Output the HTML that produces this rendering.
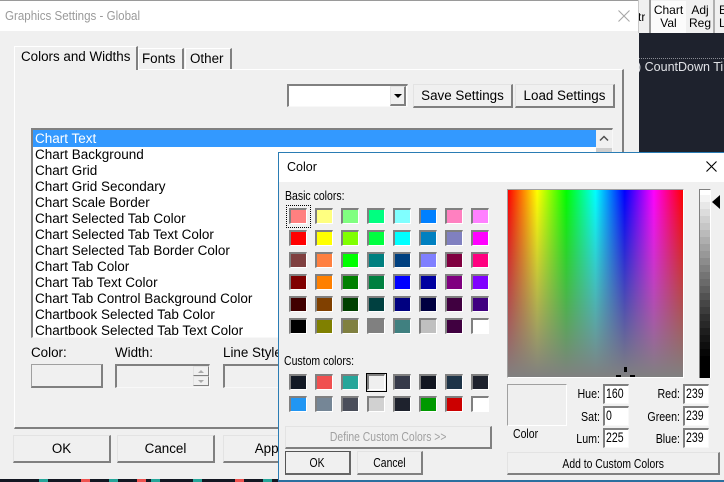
<!DOCTYPE html>
<html>
<head>
<meta charset="utf-8">
<style>
html,body{margin:0;padding:0}
body{width:724px;height:482px;position:relative;overflow:hidden;background:#1e222d;font-family:"Liberation Sans",sans-serif;font-size:13.4px;color:#000}
div,span{position:absolute;box-sizing:border-box;white-space:nowrap}
.btn{background:#f0f0f0;border-top:1px solid #e3e3e3;border-left:1px solid #e3e3e3;border-right:2px solid #808080;border-bottom:2px solid #808080;text-align:center}
.sunk{background:#fff;border-top:2px solid #808080;border-left:2px solid #808080;border-right:1px solid #f8f8f8;border-bottom:1px solid #f8f8f8}
.row{left:2px;line-height:16px;height:16px;font-size:13.5px}
.grid{display:grid;grid-template-columns:repeat(8,18px);column-gap:8px;row-gap:6px}
.grid i{display:block;width:18px;height:16px;border-top:2px solid #808080;border-left:2px solid #808080;border-right:1px solid #fff;border-bottom:1px solid #fff;box-sizing:border-box}
.lb{font-size:13px;line-height:16px;text-align:right;transform:scaleX(.82);transform-origin:right center}
.in{font-size:13.5px;line-height:16px;padding-left:1px}
.in span{position:static;display:inline-block;transform:scaleX(.78);transform-origin:left center}
.s{position:static;display:inline-block;transform:scaleX(.83)}
.sl{transform:scaleX(.84);transform-origin:left center}
</style>
</head>
<body>
<!-- right background tabs -->
<div style="left:639px;top:0;width:85px;height:33px;background:#f0f0f0"></div>
<div style="left:649px;top:0;width:2px;height:33px;background:#9a9a9a"></div>
<div style="left:651px;top:1px;width:35px;height:32px;background:#fbfbfb"></div>
<div style="left:713px;top:0;width:2px;height:33px;background:#b0b0b0"></div>
<div style="left:639px;top:0;width:6px;height:33px;overflow:hidden"><div style="left:-1px;top:9px;font-size:12px;line-height:16px">tr</div></div>
<div style="left:651px;top:4px;width:35px;text-align:center;font-size:12px;line-height:13px;height:28px">Chart<br>Val</div>
<div style="left:686px;top:4px;width:28px;text-align:center;font-size:12px;line-height:13px;height:28px">Adj<br>Reg</div>
<div style="left:719px;top:4px;font-size:12px;line-height:13px;height:28px">E<br>L</div>
<div style="left:639px;top:58px;width:85px;height:1px;border-top:1px dotted #8a8d95"></div>
<div style="left:639px;top:59px;width:85px;height:17px;overflow:hidden"><div style="left:-2px;top:0;font-size:12.500px;line-height:17px;color:#e0e2e6">) CountDown Tir</div></div>

<!-- bottom chart strip -->
<div style="left:0;top:479px;width:300px;height:3px;background:#131722"></div>
<div style="left:39px;top:479px;width:9px;height:3px;background:#26a69a"></div>
<div style="left:81px;top:479px;width:9px;height:3px;background:#ef5350"></div>
<div style="left:109px;top:479px;width:9px;height:3px;background:#26a69a"></div>
<div style="left:137px;top:479px;width:9px;height:3px;background:#ef5350"></div>
<div style="left:151px;top:479px;width:9px;height:3px;background:#26a69a"></div>
<div style="left:193px;top:479px;width:9px;height:3px;background:#26a69a"></div>
<div style="left:235px;top:479px;width:9px;height:3px;background:#ef5350"></div>
<div style="left:263px;top:479px;width:9px;height:3px;background:#26a69a"></div>

<!-- main dialog -->
<div style="left:0;top:0;width:639px;height:479px;background:#f0f0f0"></div>
<div style="left:0;top:0;width:639px;height:31px;background:#fff"></div>
<div style="left:0;top:0;width:639px;height:1px;background:#9a9a9a"></div>
<div style="left:638px;top:0;width:1px;height:33px;background:#c8c8c8"></div>
<div style="left:5px;top:8px;font-size:13px;line-height:16px;color:#9a9a9a;transform:scaleX(.89);transform-origin:left center">Graphics Settings - Global</div>
<svg style="position:absolute;left:617px;top:9px" width="14" height="14" viewBox="0 0 14 14"><path d="M1.500 1.500L12.500 12.500M12.500 1.500L1.500 12.500" stroke="#a8a8a8" stroke-width="1.100" fill="none"/></svg>

<!-- tab page -->
<div style="left:14px;top:69px;width:610px;height:360px;border-top:1px solid #fff;border-left:1px solid #fff;border-right:2px solid #808080;border-bottom:2px solid #808080"></div>
<div style="left:14px;top:46px;width:124px;height:24px;background:#f0f0f0;border-top:1px solid #fff;border-left:1px solid #fff;border-right:2px solid #808080"></div>
<div style="left:21px;top:48px;line-height:17px">Colors and Widths</div>
<div style="left:138px;top:48px;width:46px;height:21px;border-top:1px solid #fff;border-left:1px solid #fff;border-right:2px solid #808080"></div>
<div style="left:142px;top:50px;line-height:17px">Fonts</div>
<div style="left:185px;top:48px;width:47px;height:21px;border-top:1px solid #fff;border-left:1px solid #fff;border-right:2px solid #808080"></div>
<div style="left:190px;top:50px;line-height:17px">Other</div>

<!-- combo -->
<div class="sunk" style="left:287px;top:84px;width:121px;height:23px"></div>
<div class="btn" style="left:390px;top:86px;width:16px;height:20px"></div>
<div style="left:394px;top:94px;width:0;height:0;border-left:4px solid transparent;border-right:4px solid transparent;border-top:4px solid #000"></div>
<div class="btn" style="left:413px;top:84px;width:100px;height:24px;line-height:21px">Save Settings</div>
<div class="btn" style="left:515px;top:84px;width:100px;height:24px;line-height:21px">Load Settings</div>

<!-- list -->
<div class="sunk" style="left:31px;top:128px;width:582px;height:210px;overflow:hidden">
  <div style="left:0;top:0;width:563px;height:17px;background:#3399ff"></div>
  <div class="row" style="top:0;color:#fff;line-height:17px">Chart Text</div>
  <div class="row" style="top:17px">Chart Background</div>
  <div class="row" style="top:33px">Chart Grid</div>
  <div class="row" style="top:49px">Chart Grid Secondary</div>
  <div class="row" style="top:65px">Chart Scale Border</div>
  <div class="row" style="top:81px">Chart Selected Tab Color</div>
  <div class="row" style="top:97px">Chart Selected Tab Text Color</div>
  <div class="row" style="top:113px">Chart Selected Tab Border Color</div>
  <div class="row" style="top:129px">Chart Tab Color</div>
  <div class="row" style="top:145px">Chart Tab Text Color</div>
  <div class="row" style="top:161px">Chart Tab Control Background Color</div>
  <div class="row" style="top:177px">Chartbook Selected Tab Color</div>
  <div class="row" style="top:193px">Chartbook Selected Tab Text Color</div>
  <div style="left:563px;top:0;width:16px;height:18px;background:#f0f0f0"></div>
  <div style="left:563px;top:18px;width:16px;height:8px;background:#cdcdcd"></div>
  <svg style="position:absolute;left:566px;top:5px" width="10" height="7" viewBox="0 0 10 7"><path d="M1 5.500L5 1.500L9 5.500" stroke="#505050" stroke-width="1.500" fill="none"/></svg>
</div>

<div style="left:31px;top:344px;line-height:17px">Color:</div>
<div style="left:115px;top:344px;line-height:17px">Width:</div>
<div style="left:223px;top:344px;line-height:17px">Line Style:</div>
<div class="btn" style="left:31px;top:364px;width:72px;height:24px;border-top:1px solid #a0a0a0;border-left:1px solid #a0a0a0"></div>
<div class="sunk" style="left:115px;top:364px;width:95px;height:24px;background:#f0f0f0"></div>
<div class="btn" style="left:193px;top:366px;width:16px;height:10px;border-width:1px"></div>
<div class="btn" style="left:193px;top:376px;width:16px;height:10px;border-width:1px"></div>
<div style="left:198px;top:370px;width:0;height:0;border-left:3px solid transparent;border-right:3px solid transparent;border-bottom:3px solid #aaa"></div>
<div style="left:198px;top:380px;width:0;height:0;border-left:3px solid transparent;border-right:3px solid transparent;border-top:3px solid #aaa"></div>
<div class="sunk" style="left:223px;top:364px;width:70px;height:24px;background:#f0f0f0"></div>

<div class="btn" style="left:13px;top:435px;width:98px;height:28px;line-height:25px">OK</div>
<div class="btn" style="left:117px;top:435px;width:98px;height:28px;line-height:25px">Cancel</div>
<div class="btn" style="left:223px;top:435px;width:98px;height:28px;line-height:25px">Apply</div>

<!-- color dialog -->
<div style="left:278px;top:152px;width:446px;height:330px;background:#f0f0f0;border-top:1px solid #2a7cb4;border-left:1px solid #2a7cb4;border-bottom:2px solid #2a6f9f"></div>
<div style="left:279px;top:153px;width:445px;height:29px;background:#fff"></div>
<div style="left:287px;top:159px;font-size:12.500px;line-height:16px">Color</div>
<svg style="position:absolute;left:705px;top:160px" width="13" height="13" viewBox="0 0 13 13"><path d="M1.500 1.500L11.500 11.500M11.500 1.500L1.500 11.500" stroke="#000" stroke-width="1.100" fill="none"/></svg>

<div class="sl" style="left:285px;top:188px;font-size:12.500px;line-height:16px">Basic colors:</div>
<div class="grid" style="left:289px;top:208px">
<i style="background:#ff8080"></i><i style="background:#ffff80"></i><i style="background:#80ff80"></i><i style="background:#00ff80"></i><i style="background:#80ffff"></i><i style="background:#0080ff"></i><i style="background:#ff80c0"></i><i style="background:#ff80ff"></i>
<i style="background:#ff0000"></i><i style="background:#ffff00"></i><i style="background:#80ff00"></i><i style="background:#00ff40"></i><i style="background:#00ffff"></i><i style="background:#0080c0"></i><i style="background:#8080c0"></i><i style="background:#ff00ff"></i>
<i style="background:#804040"></i><i style="background:#ff8040"></i><i style="background:#00ff00"></i><i style="background:#008080"></i><i style="background:#004080"></i><i style="background:#8080ff"></i><i style="background:#800040"></i><i style="background:#ff0080"></i>
<i style="background:#800000"></i><i style="background:#ff8000"></i><i style="background:#008000"></i><i style="background:#008040"></i><i style="background:#0000ff"></i><i style="background:#0000a0"></i><i style="background:#800080"></i><i style="background:#8000ff"></i>
<i style="background:#400000"></i><i style="background:#804000"></i><i style="background:#004000"></i><i style="background:#004040"></i><i style="background:#000080"></i><i style="background:#000040"></i><i style="background:#400040"></i><i style="background:#400080"></i>
<i style="background:#000000"></i><i style="background:#808000"></i><i style="background:#808040"></i><i style="background:#808080"></i><i style="background:#408080"></i><i style="background:#c0c0c0"></i><i style="background:#400040"></i><i style="background:#ffffff"></i>
</div>
<div style="left:286px;top:205px;width:25px;height:23px;border:1px dotted #000"></div>

<div class="sl" style="left:284px;top:353px;font-size:12.500px;line-height:16px">Custom colors:</div>
<div class="grid" style="left:289px;top:374px">
<i style="background:#131a26"></i><i style="background:#f05050"></i><i style="background:#26a69a"></i><i style="background:#efefef"></i><i style="background:#363a4a"></i><i style="background:#131722"></i><i style="background:#1e3448"></i><i style="background:#1e222d"></i>
<i style="background:#2196f3"></i><i style="background:#758696"></i><i style="background:#4a4e5a"></i><i style="background:#d1d1d1"></i><i style="background:#1e222d"></i><i style="background:#009900"></i><i style="background:#cc0000"></i><i style="background:#ffffff"></i>
</div>
<div style="left:366px;top:373px;width:21px;height:19px;border:1px solid #000"></div>

<div class="btn" style="left:285px;top:426px;width:207px;height:23px;font-size:12.500px;line-height:20px;color:#a0a0a0"><span class="s">Define Custom Colors &gt;&gt;</span></div>
<div class="btn" style="left:285px;top:451px;width:66px;height:24px;font-size:12.500px;line-height:23px;border:1px solid #555;border-right:2px solid #666;border-bottom:2px solid #666"><span class="s">OK</span></div>
<div class="btn" style="left:357px;top:451px;width:66px;height:24px;font-size:12.500px;line-height:23px"><span class="s">Cancel</span></div>

<!-- spectrum -->
<div style="left:507px;top:189px;width:177px;height:189px;border-top:1px solid #a0a0a0;border-left:1px solid #a0a0a0;border-right:1px solid #fff;border-bottom:1px solid #fff;background:linear-gradient(to bottom,rgba(128,128,128,0),#808080),linear-gradient(to right,#f00,#ff0 16.67%,#0f0 33.33%,#0ff 50%,#00f 66.67%,#f0f 83.33%,#f00)"></div>
<div style="left:624px;top:367px;width:3px;height:5px;background:#000"></div>
<div style="left:616px;top:375px;width:5px;height:2px;background:#000"></div>
<div style="left:630px;top:375px;width:5px;height:2px;background:#000"></div>

<!-- luminance bar -->
<div style="left:699px;top:189px;width:12px;height:189px;border-top:1px solid #808080;border-left:1px solid #808080;border-right:1px solid #fff;background:linear-gradient(to bottom,#fff 0,#fff 5px,#f4f4f4 5px,#f4f4f4 12px,#e8e8e8 12px,#e8e8e8 19px,#dcdcdc 19px,#dcdcdc 26px,#d0d0d0 26px,#d0d0d0 33px,#c6c6c6 33px,#c6c6c6 40px,#bababa 40px,#bababa 47px,#aeaeae 47px,#aeaeae 54px,#a2a2a2 54px,#a2a2a2 61px,#989898 61px,#989898 68px,#8c8c8c 68px,#8c8c8c 75px,#808080 75px,#808080 82px,#747474 82px,#747474 89px,#6a6a6a 89px,#6a6a6a 96px,#5e5e5e 96px,#5e5e5e 103px,#525252 103px,#525252 110px,#464646 110px,#464646 117px,#3c3c3c 117px,#3c3c3c 124px,#303030 124px,#303030 131px,#282828 131px,#282828 138px,#1e1e1e 138px,#1e1e1e 145px,#161616 145px,#161616 152px,#0e0e0e 152px,#0e0e0e 159px,#060606 159px,#060606 166px,#000 166px)"></div>
<div style="left:712px;top:195px;width:0;height:0;border-top:7px solid transparent;border-bottom:7px solid transparent;border-right:8px solid #000"></div>

<!-- preview -->
<div style="left:507px;top:384px;width:60px;height:42px;background:#efefef;border-top:1px solid #a0a0a0;border-left:1px solid #a0a0a0;border-right:1px solid #fff;border-bottom:1px solid #fff"></div>
<div class="sl" style="left:513px;top:426px;font-size:12.500px;line-height:16px">Color</div>

<div class="lb" style="left:570px;top:386px;width:30px">Hue:</div>
<div class="lb" style="left:570px;top:409px;width:30px">Sat:</div>
<div class="lb" style="left:570px;top:431px;width:30px">Lum:</div>
<div class="sunk in" style="left:603px;top:384px;width:26px;height:20px"><span>160</span></div>
<div class="sunk in" style="left:603px;top:406px;width:26px;height:20px"><span>0</span></div>
<div class="sunk in" style="left:603px;top:428px;width:26px;height:20px"><span>225</span></div>
<div class="lb" style="left:640px;top:386px;width:40px">Red:</div>
<div class="lb" style="left:640px;top:409px;width:40px">Green:</div>
<div class="lb" style="left:640px;top:431px;width:40px">Blue:</div>
<div class="sunk in" style="left:683px;top:384px;width:26px;height:20px"><span>239</span></div>
<div class="sunk in" style="left:683px;top:406px;width:26px;height:20px"><span>239</span></div>
<div class="sunk in" style="left:683px;top:428px;width:26px;height:20px"><span>239</span></div>

<div class="btn" style="left:507px;top:452px;width:213px;height:23px;font-size:12.500px;line-height:22px"><span class="s">Add to Custom Colors</span></div>
</body>
</html>
